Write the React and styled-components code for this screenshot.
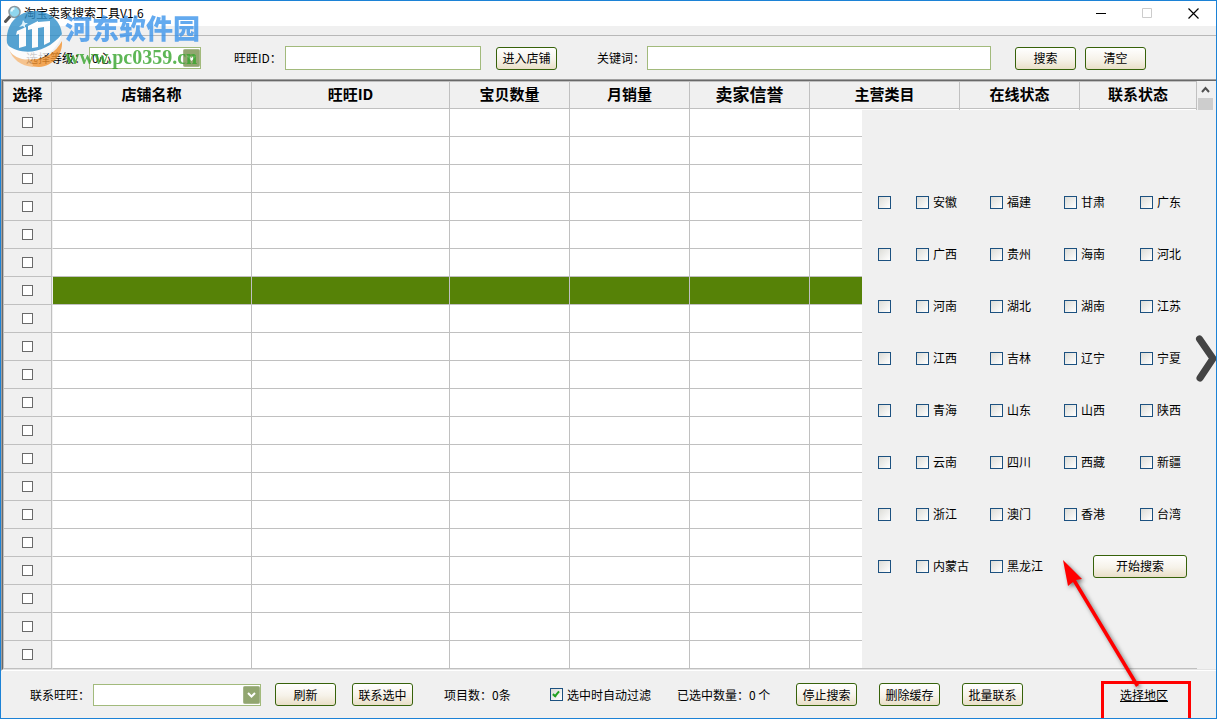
import React, { useState } from 'react';
import styled, { createGlobalStyle, css } from 'styled-components';

const COLUMNS = [
  { title: '选择', width: 49 },
  { title: '店铺名称', width: 200 },
  { title: '旺旺ID', width: 198 },
  { title: '宝贝数量', width: 120 },
  { title: '月销量', width: 120 },
  { title: '卖家信誉', width: 120, large: true },
  { title: '主营类目', width: 150 },
  { title: '在线状态', width: 120 },
  { title: '联系状态' },
];

const ROW_COUNT = 20;
const ACTIVE_ROW = 6;

const REGIONS = [
  ['安徽', '福建', '甘肃', '广东'],
  ['广西', '贵州', '海南', '河北'],
  ['河南', '湖北', '湖南', '江苏'],
  ['江西', '吉林', '辽宁', '宁夏'],
  ['青海', '山东', '山西', '陕西'],
  ['云南', '四川', '西藏', '新疆'],
  ['浙江', '澳门', '香港', '台湾'],
  ['内蒙古', '黑龙江'],
];

export default function App() {
  return (
    <Window>
      <GlobalStyle />
      <TitleBar />
      <MenuStrip />
      <SearchBar />
      <ShopTable />
      <ActionBar />
      <Watermark />
      <Pointer />
    </Window>
  );
}

function TitleBar() {
  return (
    <Title>
      <svg width="18" height="18" viewBox="0 0 18 18" aria-hidden="true">
        <path d="M1.5 16.5 6 11.5" stroke="#555" strokeWidth="3" strokeLinecap="round" />
        <circle cx="10.5" cy="7" r="5.5" fill="#8fd6ee" stroke="#8b979e" strokeWidth="1.5" />
        <path d="M7.5 6.5a3 3 0 0 1 3-3" fill="none" stroke="#e9fbff" strokeWidth="2" />
      </svg>
      <TitleText>淘宝卖家搜索工具V1.6</TitleText>
      <WindowButton aria-label="最小化">
        <svg width="11" height="11" viewBox="0 0 11 11">
          <path d="M0 5.5h10" stroke="#000" />
        </svg>
      </WindowButton>
      <WindowButton aria-label="最大化" disabled>
        <svg width="11" height="11" viewBox="0 0 11 11">
          <path d="M.5.5h9v9h-9z" fill="none" stroke="#ccc" />
        </svg>
      </WindowButton>
      <WindowButton aria-label="关闭">
        <svg width="11" height="11" viewBox="0 0 11 11">
          <path d="m.5.5 10 10m0-10-10 10" stroke="#000" strokeWidth="1.2" />
        </svg>
      </WindowButton>
    </Title>
  );
}

function Combo({ id, width, children }) {
  return (
    <ComboBox $width={width}>
      <select id={id}>{children}</select>
      <ComboArrow viewBox="0 0 17 18" aria-hidden="true">
        <rect x=".5" y=".5" width="16" height="17" rx="1" fill="#92a670" stroke="#a5b58a" />
        <path d="m5 7 3.5 3.5L12 7" fill="none" stroke="#fff" strokeWidth="2" />
      </ComboArrow>
    </ComboBox>
  );
}

function SearchBar() {
  return (
    <Toolbar>
      <Label htmlFor="level" $width={63}>选择等级：</Label>
      <Combo id="level" width={112}>
        <option>0心</option>
      </Combo>
      <Spacer $width={33} />
      <Label htmlFor="wangwang" $width={51}>旺旺ID：</Label>
      <TextInput id="wangwang" type="text" $width={196} />
      <Spacer $width={15} />
      <Button>进入店铺</Button>
      <Spacer $width={40} />
      <Label htmlFor="keyword" $width={50}>关键词：</Label>
      <TextInput id="keyword" type="text" />
      <Spacer $width={24} />
      <Button>搜索</Button>
      <Spacer $width={9} />
      <Button>清空</Button>
    </Toolbar>
  );
}

function ShopTable() {
  return (
    <TableBevel>
      <TableFrame>
        <Table>
          <colgroup>
            {COLUMNS.map(({ title, width }) => (
              <col key={title} width={width} />
            ))}
          </colgroup>
          <thead>
            <tr>
              {COLUMNS.map(({ title, large }) => (
                <HeadCell key={title} $large={large}>{title}</HeadCell>
              ))}
            </tr>
          </thead>
          <tbody>
            {Array.from({ length: ROW_COUNT }, (_, row) => (
              <Row key={row} $active={row === ACTIVE_ROW}>
                <td>
                  <RowCheckbox type="checkbox" aria-label={`选择第${row + 1}行`} />
                </td>
                {COLUMNS.slice(1).map(({ title }) => (
                  <td key={title} />
                ))}
              </Row>
            ))}
          </tbody>
        </Table>
        <ScrollBar>
          <svg width="19" height="17" viewBox="0 0 19 17" aria-hidden="true">
            <path d="m5 11 3.500-4 3.500 4" fill="none" stroke="#505050" strokeWidth="2" />
          </svg>
          <ScrollThumb />
        </ScrollBar>
        <RegionPanel />
      </TableFrame>
    </TableBevel>
  );
}

function RegionPanel() {
  return (
    <Panel>
      {REGIONS.map((names, index) => (
        <RegionRow key={names[0]}>
          <Checkbox type="checkbox" aria-label={`全选第${index + 1}组`} />
          {names.map((name) => (
            <CheckLabel key={name}>
              <Checkbox type="checkbox" />
              {name}
            </CheckLabel>
          ))}
          {names.length < 4 && <StartButton>开始搜索</StartButton>}
        </RegionRow>
      ))}
      <CollapseButton aria-label="收起">
        <svg width="22" height="50" viewBox="0 0 22 50">
          <path
            d="M4.5 5 18 24.5 5 44"
            fill="none"
            stroke="#444"
            strokeWidth="7"
            strokeLinecap="round"
            strokeLinejoin="round"
          />
        </svg>
      </CollapseButton>
    </Panel>
  );
}

function ActionBar() {
  const [autoFilter, setAutoFilter] = useState(true);

  return (
    <Footer>
      <Label htmlFor="contact" $width={63}>联系旺旺：</Label>
      <Combo id="contact" width={168} />
      <Spacer $width={14} />
      <Button>刷新</Button>
      <Spacer $width={16} />
      <Button>联系选中</Button>
      <Spacer $width={31} />
      <Label as="span" $width={106}>项目数：0条</Label>
      <CheckLabel>
        <Checkbox
          type="checkbox"
          checked={autoFilter}
          onChange={(e) => setAutoFilter(e.target.checked)}
        />
        选中时自动过滤
      </CheckLabel>
      <Spacer $width={26} />
      <Label as="span" $width={119}>已选中数量：0 个</Label>
      <Button>停止搜索</Button>
      <Spacer $width={22} />
      <Button>删除缓存</Button>
      <Spacer $width={22} />
      <Button>批量联系</Button>
      <RegionLink href="#region">选择地区</RegionLink>
    </Footer>
  );
}

function Watermark() {
  return (
    <Mark>
      <svg width="60" height="60" viewBox="0 0 60 60" aria-hidden="true">
        <path d="M3 34C1 15 14 2 31 2c15 0 26 10 27 24-7 13-20 19-33 19C14 45 6 41 3 34z" fill="#2f8fca" />
        <path d="M24 50c14 2 27-5 34-18 1 14-9 25-23 26-8 0-15-3-20-9z" fill="#f3932f" />
        <path d="M5 40c5 7 13 10 21 11 2 2 3 4 3 7C17 57 8 50 5 40z" fill="#f7b877" />
        <path d="M3 36c15 11 39 9 55-11-5 19-24 28-40 25C10 48 5 43 3 36z" fill="#fff" />
        <path d="M13 22l9-4v19l-7 2V25l-3 1z" fill="#fff" />
        <path d="M24 17l10-5v26l-6 1V20l-4 1z" fill="#fff" />
        <path d="M34 13l12-1v21l-6 3V18l-6 1z" fill="#fff" />
        <path d="m19 11 2 3 3 0-3 2 0 3-2-2-4 1 3-3z" fill="#d8effa" />
      </svg>
      <div>
        <MarkName>河东软件园</MarkName>
        <MarkSite>www.pc0359.cn</MarkSite>
      </div>
    </Mark>
  );
}

function Pointer() {
  return (
    <PointerDrawing viewBox="0 0 162 164" aria-hidden="true">
      <g fill="#f00">
        <path d="m8 5 19 19-6 1 63 105-3 2L18 27l-5 4z" />
      </g>
      <path d="M47.5 164v-36.5h87V164" fill="none" stroke="#f00" strokeWidth="3" />
    </PointerDrawing>
  );
}

const GlobalStyle = createGlobalStyle`
  *,
  *::before,
  *::after {
    box-sizing: border-box;
  }

  body {
    margin: 0;
    background: #f0f0f0;
  }

  body,
  button,
  input,
  select {
    font-family: 'Noto Sans CJK SC', sans-serif;
    font-size: 12px;
    line-height: 16px;
    color: #000;
  }
`;

const Window = styled.div`
  position: relative;
  display: flex;
  flex-direction: column;
  min-height: 100vh;
  border: 1px solid #1c82d6;
  background: #f0f0f0;
  overflow: hidden;
`;

const Title = styled.header`
  display: flex;
  align-items: center;
  height: 25px;
  padding-left: 3px;
  background: #fff;
`;

const TitleText = styled.h1`
  flex: 1;
  margin: 0 0 2px 2px;
  font-size: 12px;
  font-weight: 400;
`;

const WindowButton = styled.button`
  display: flex;
  align-items: center;
  justify-content: center;
  width: 46px;
  height: 25px;
  padding: 0;
  border: 0;
  background: none;
`;

const MenuStrip = styled.div`
  height: 10px;
  border-bottom: 1px solid #b8b8b8;
`;

const Toolbar = styled.section`
  display: flex;
  align-items: center;
  height: 43px;
  padding: 1px 70px 0 25px;
`;

const Footer = styled.footer`
  flex: 1;
  display: flex;
  align-items: center;
  min-height: 47px;
  padding: 0 48px 0 29px;
`;

const Spacer = styled.div`
  flex: none;
  width: ${({ $width }) => $width}px;
`;

const Label = styled.label`
  flex: none;
  width: ${({ $width }) => $width}px;
  white-space: nowrap;
`;

const TextInput = styled.input`
  flex: ${({ $width }) => ($width ? `0 0 ${$width}px` : '1')};
  min-width: 0;
  height: 24px;
  padding: 0 4px;
  border: 1px solid #a2ba7c;
  background: #fff;
  outline: 0;
`;

const Button = styled.button`
  flex: none;
  width: 61px;
  height: 23px;
  padding: 0;
  border: 1px solid #37620a;
  border-radius: 3px;
  background: linear-gradient(#fff, #f6f2e9 55%, #e9dfc8);
  white-space: nowrap;
`;

const ComboBox = styled.div`
  position: relative;
  flex: none;
  width: ${({ $width }) => $width}px;

  select {
    appearance: none;
    display: block;
    width: 100%;
    height: 22px;
    padding: 0 20px 0 2px;
    border: 1px solid #a2ba7c;
    border-radius: 0;
    background: #fff;
    outline: 0;
  }
`;

const ComboArrow = styled.svg`
  position: absolute;
  top: 2px;
  right: 1px;
  width: 17px;
  height: 18px;
  pointer-events: none;
`;

const TableBevel = styled.main`
  border: solid #a0a0a0;
  border-width: 1px 0 0 1px;
  border-bottom: 1px solid #fff;
`;

const TableFrame = styled.div`
  position: relative;
  display: flex;
  border: solid #696969;
  border-width: 1px 0 0 1px;
  border-bottom: 1px solid #e3e3e3;
`;

const Table = styled.table`
  flex: 1;
  min-width: 0;
  width: 0;
  table-layout: fixed;
  border-collapse: separate;
  border-spacing: 0;

  th,
  td {
    height: 28px;
    padding: 0;
    border-right: 1px solid #c0c0c0;
    border-bottom: 1px solid #c0c0c0;
    text-align: center;
    vertical-align: middle;
  }

  th:first-child,
  td:first-child {
    border-left: 1px solid #c0c0c0;
  }
`;

const HeadCell = styled.th`
  && {
    padding-bottom: 2px;
  }

  border-top: 1px solid #c0c0c0;
  font-size: ${({ $large }) => ($large ? 17 : 15)}px;
  font-weight: 700;
  line-height: 20px;
`;

const Row = styled.tr`
  td {
    background: ${({ $active }) => ($active ? '#568207' : '#fff')};
  }

  td:first-child {
    background: #f0f0f0;
  }

  td:nth-child(2) {
    border-left: 1px solid #f0f0f0;
  }
`;

const RowCheckbox = styled.input`
  appearance: none;
  display: block;
  width: 11px;
  height: 11px;
  margin: 0 auto;
  border: 1px solid #6a6a6a;
  background: #fff;
`;

const ScrollBar = styled.div`
  display: flex;
  flex-direction: column;
  width: 19px;

  svg {
    flex: none;
  }
`;

const ScrollThumb = styled.div`
  width: 15px;
  height: 40px;
  margin-left: 1px;
  background: #cdcdcd;
`;

const Panel = styled.aside`
  position: absolute;
  top: 29px;
  right: 0;
  bottom: 1px;
  width: 354px;
  padding: 66px 0 0 16px;
  background: #f0f0f0;
`;

const RegionRow = styled.div`
  display: grid;
  grid-template-columns: 38px 74px 74px 76px 1fr;
  align-items: center;
  height: 52px;
`;

const CheckLabel = styled.label`
  display: flex;
  align-items: center;
  gap: 4px;
  white-space: nowrap;
`;

const tick = css`
  &:checked::after {
    content: '';
    display: block;
    width: 4px;
    height: 7px;
    margin: 1px 0 0 3px;
    border: solid #21a121;
    border-width: 0 2px 2px 0;
    transform: rotate(40deg);
  }
`;

const Checkbox = styled.input`
  appearance: none;
  flex: none;
  width: 13px;
  height: 13px;
  margin: 0;
  border: 1px solid #1c5180;
  background: linear-gradient(135deg, #dcdcd7, #fff);

  ${tick}
`;

const StartButton = styled(Button)`
  grid-column: 4 / 6;
  justify-self: end;
  width: 94px;
  margin-right: 29px;
`;

const CollapseButton = styled.button`
  position: absolute;
  top: 224px;
  right: -1px;
  display: flex;
  padding: 0;
  border: 0;
  background: none;
`;

const RegionLink = styled.a`
  margin-left: auto;
  color: #000;
  text-decoration: underline;
`;

const Mark = styled.div`
  position: absolute;
  top: 8px;
  left: 3px;
  display: flex;
  gap: 1px;
  opacity: 0.8;
  pointer-events: none;
`;

const MarkName = styled.div`
  font-size: 27px;
  font-weight: 900;
  line-height: 38px;
  color: #3d95ec;
  white-space: nowrap;
`;

const MarkSite = styled.div`
  font-family: 'Liberation Serif', serif;
  font-size: 20px;
  font-weight: 700;
  line-height: 20px;
  color: #36a52c;
`;

const PointerDrawing = styled.svg`
  position: absolute;
  right: -1px;
  bottom: -1px;
  width: 162px;
  height: 164px;
  pointer-events: none;

  g {
    filter: drop-shadow(2px 2px 2px rgba(0, 0, 0, 0.5));
  }
`;
